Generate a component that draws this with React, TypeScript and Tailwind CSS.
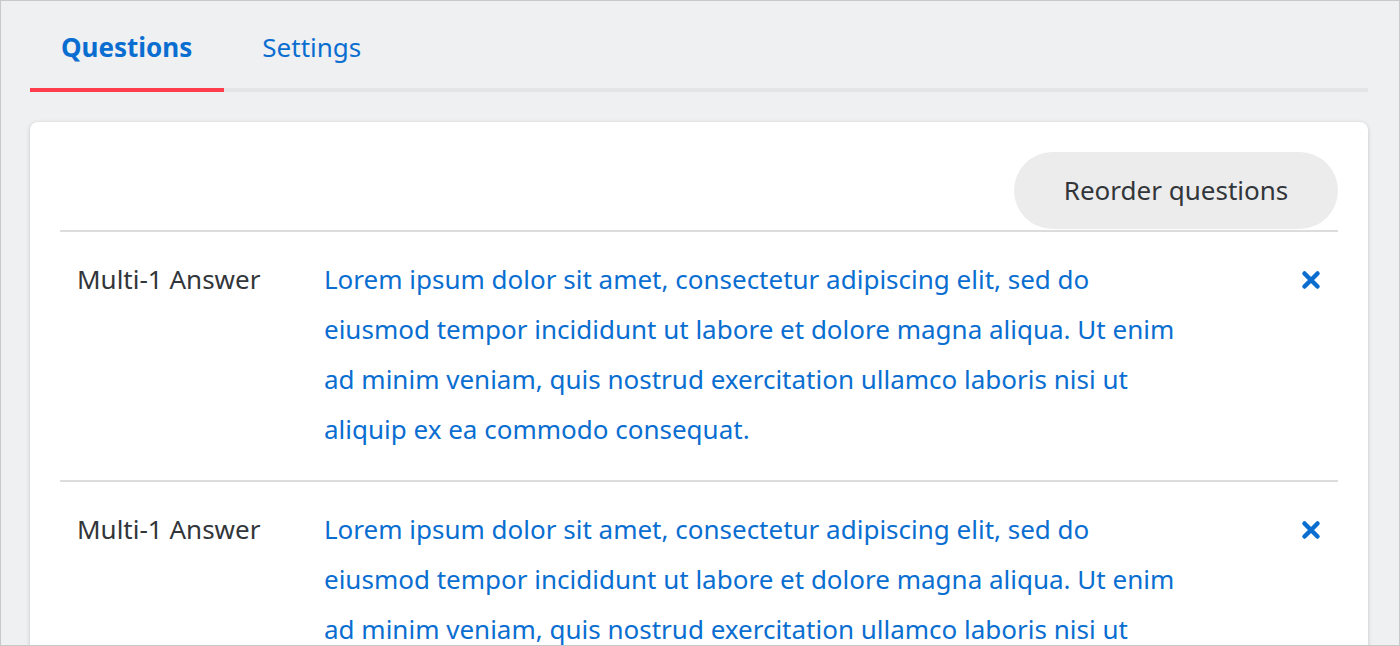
const lorem =
  'Lorem ipsum dolor sit amet, consectetur adipiscing elit, sed do eiusmod tempor incididunt ut labore et dolore magna aliqua. Ut enim ad minim veniam, quis nostrud exercitation ullamco laboris nisi ut aliquip ex ea commodo consequat.'

function QuestionRow({ type, text }: { type: string; text: string }) {
  return (
    <div className="flex items-start border-b-2 border-[#dcdcdc] pt-[22px] pb-[26px]">
      <div className="w-[264px] shrink-0 pl-[17px] text-[26px] leading-[50px] text-[#32363a]">{type}</div>
      <div className="w-[860px] text-[26px] leading-[50px] text-[#0a6ed1]">{text}</div>
      <div className="ml-auto pr-[17px] pt-[16px]">
        <svg width="20" height="20" viewBox="0 0 20 20" className="text-[#0a6ed1]">
          <path d="M3.5 3.5 L16.5 16.5 M16.5 3.5 L3.5 16.5" stroke="currentColor" strokeWidth="4.5" strokeLinecap="round" />
        </svg>
      </div>
    </div>
  )
}

export default function App() {
  return (
    <div
      className="h-[646px] overflow-hidden border border-[#c8c8c8] bg-[#eff0f2] pl-[29px] pr-[31px]"
      style={{ fontFamily: '"Noto Sans", "Open Sans", sans-serif' }}
    >
      {/* Tabs */}
      <div className="flex border-b-[4px] border-[#e4e5e7] pt-[28px]">
        <div className="-mb-[4px] border-b-[4px] border-[#ff3d4c] pl-[31px] pr-[32px] pb-[23px] text-[26px] leading-[36px] font-bold text-[#0a6ed1]">
          Questions
        </div>
        <div className="px-[38px] pb-[23px] text-[26px] leading-[36px] text-[#0a6ed1]">Settings</div>
      </div>

      {/* Card */}
      <div className="mt-[30px] rounded-[8px] bg-white px-[30px] pt-[30px] shadow-[0_1px_4px_rgba(0,0,0,0.18)]">
        <div className="flex justify-end border-b-2 border-[#dcdcdc] pb-[1px]">
          <button className="h-[77px] w-[324px] rounded-full bg-[#ececec] text-[26px] text-[#32363a]">
            Reorder questions
          </button>
        </div>
        <QuestionRow type="Multi-1 Answer" text={lorem} />
        <QuestionRow type="Multi-1 Answer" text={lorem} />
      </div>
    </div>
  )
}
